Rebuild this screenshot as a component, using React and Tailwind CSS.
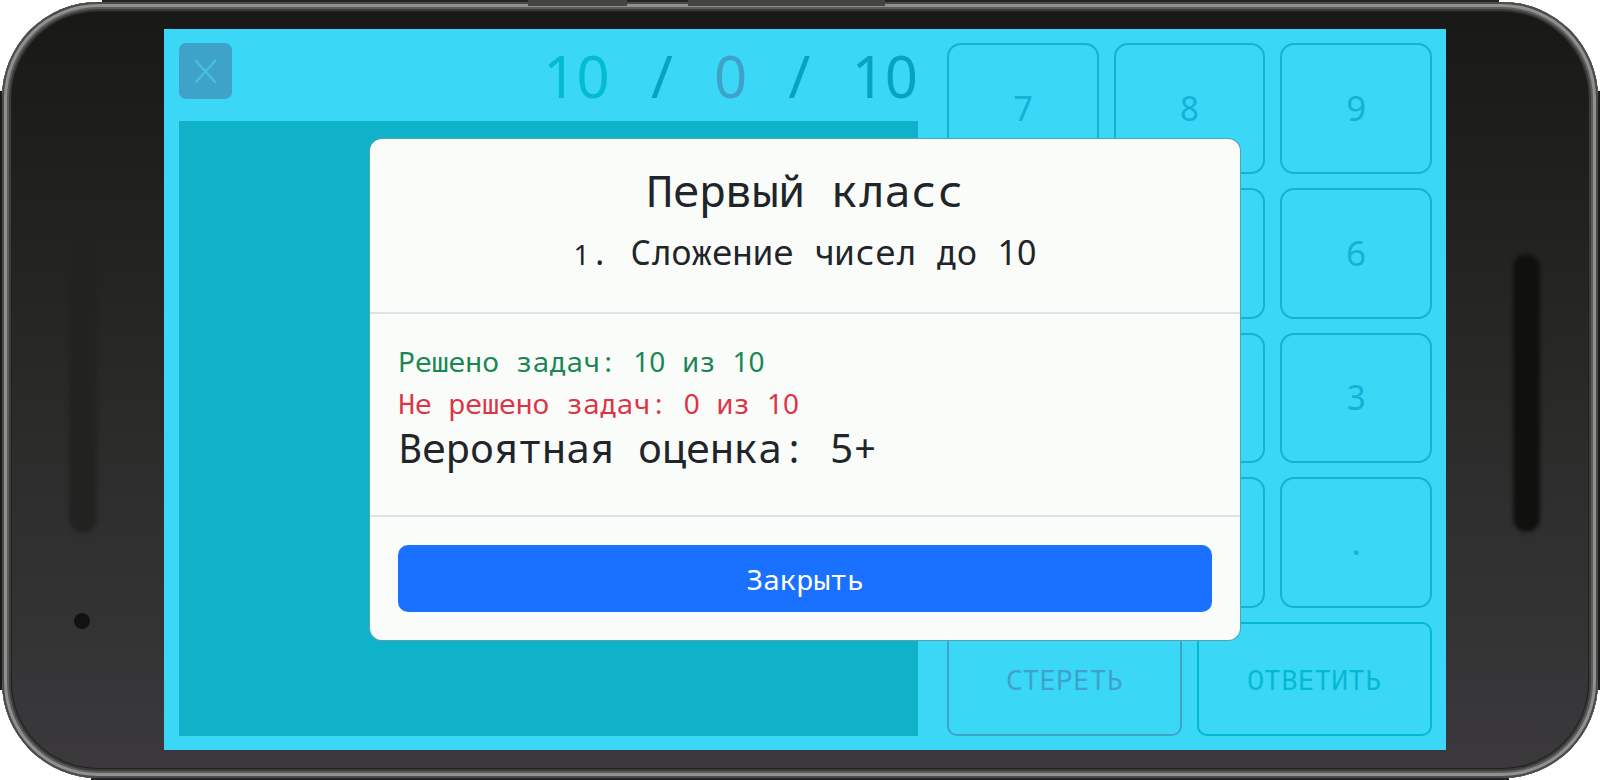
const DIGIT = "font-['Noto_Sans',sans-serif]";

const KEYS = ["7", "8", "9", "4", "5", "6", "1", "2", "3", "-", "0", "."];

const COVERED = ["4", "5", "1", "2", "-", "0"];

function Num({ children, className = "" }) {
  return <span className={`${DIGIT} ${className}`}>{children}</span>;
}

function PhoneDecor() {
  return (
    <div aria-hidden="true" className="pointer-events-none absolute inset-0">
      <div className="absolute top-[91px] bottom-[90px] left-0 w-[3px] bg-[#1c1d1b]" />
      <div className="absolute top-[91px] right-0 bottom-[90px] w-[3px] bg-[#1c1d1b]" />
      <div className="absolute top-0 right-[101px] left-[102px] h-[3px] bg-[#232421]" />
      <div className="absolute right-[91px] bottom-0 left-[91px] h-[3px] bg-[#232224]" />
      <div className="absolute inset-x-0.5 inset-y-0.5 rounded-[96px] bg-linear-to-b from-[#181917] via-[#292a28] to-[#3b393c] shadow-[inset_0_0_0_2px_#4a4b48,inset_0_0_0_5px_#90918e,inset_0_0_0_7px_#5d5e5b,inset_0_0_0_9px_#3b3c39,inset_0_0_0_10px_#20211f]" />
      <div className="absolute top-0 left-[33%] h-1.5 w-[99px] bg-[#444542]" />
      <div className="absolute top-0 left-[43%] h-1.5 w-[197px] bg-[#444542]" />
      <div className="absolute top-[246px] bottom-[247px] left-[69px] w-7 rounded-full bg-[#222321] blur-[2px]" />
      <div className="absolute top-[254px] right-[60px] bottom-[248px] w-[27px] rounded-full bg-[#10110f] blur-[2px]" />
      <div className="absolute bottom-[151px] left-[74px] size-4 rounded-full bg-[#121115]" />
    </div>
  );
}

function Score() {
  return (
    <p className="text-[58px] leading-[66px] whitespace-pre text-[#04a4c6]">
      <Num className="text-[#04bbd0]">10</Num>
      {" / "}
      <Num className="text-[#3fa3c9]">0</Num>
      {" / "}
      <Num>10</Num>
    </p>
  );
}

function Keypad() {
  return (
    <div className="grid grid-cols-6 grid-rows-[131fr_131fr_131fr_131fr_114fr] gap-x-[15px] gap-y-3.5">
      {KEYS.map((k) => (
        <button
          key={k}
          type="button"
          aria-label={k}
          className="col-span-2 rounded-[14px] border-2 border-[#17b1d5] text-[34px] text-[#15b1d6]"
        >
          {COVERED.includes(k) ? null : k}
        </button>
      ))}
      <button type="button" className="col-span-3 rounded-[10px] border-2 border-[#3fa3c9] text-[28px] text-[#3fa3c9]">
        СТЕРЕТЬ
      </button>
      <button type="button" className="col-span-3 rounded-[10px] border-2 border-[#04b9cf] text-[28px] text-[#04b9cf]">
        ОТВЕТИТЬ
      </button>
    </div>
  );
}

function ResultDialog() {
  return (
    <div
      role="dialog"
      aria-modal="true"
      aria-labelledby="result-title"
      className="w-[68%] rounded-[13px] border border-[#0a7f96]/70 bg-[#fafcf9] text-[#212529]"
    >
      <header className="border-b-2 border-[#dee2e6] px-7 pt-[25px] pb-[34px] text-center">
        <h1 id="result-title" className="mb-3 text-[44px] leading-[53px]">
          Первый класс
        </h1>
        <h2 className="text-[34px] leading-[47px]">
          <Num className="text-[28px]">1</Num>. Сложение чисел до <Num>10</Num>
        </h2>
      </header>
      <div className="border-b-2 border-[#dee2e6] px-7 pt-[26px] pb-11">
        <p className="text-[28px] leading-[42px] text-[#198754]">
          Решено задач: <Num>10</Num> из <Num>10</Num>
        </p>
        <p className="text-[28px] leading-[42px] text-[#dc3545]">
          Не решено задач: <Num>0</Num> из <Num>10</Num>
        </p>
        <p className="text-[40px] leading-[47px]">
          Вероятная оценка: <Num>5</Num>+
        </p>
      </div>
      <footer className="p-7">
        <button type="button" className="h-[67px] w-full rounded-[10px] bg-[#1a70ff] text-[28px] text-white">
          Закрыть
        </button>
      </footer>
    </div>
  );
}

export default function App() {
  return (
    <div className="relative flex min-h-screen bg-white pt-[29px] pr-[154px] pb-[30px] pl-[164px] font-['Noto_Sans_Mono','DejaVu_Sans_Mono',monospace]">
      <PhoneDecor />
      <main className="relative grid flex-1 grid-cols-[739fr_485fr] gap-[29px] bg-[#3ad7f7] p-3.5 pl-[15px]">
        <section className="flex flex-col">
          <div className="flex h-[78px] items-start justify-between">
            <button
              type="button"
              aria-label="Закрыть"
              className="flex h-14 w-[53px] items-center justify-center rounded-[7px] bg-[#3fa3c9]"
            >
              <svg viewBox="0 0 22 24" className="h-6 w-[22px]" fill="none" stroke="#43c0e2" strokeWidth="2.4">
                <path d="M0 1 21 24M21 1 0 24" />
              </svg>
            </button>
            <Score />
          </div>
          <div className="flex-1 bg-[#0fb2c8]" />
        </section>
        <Keypad />
        <div className="absolute inset-0 flex items-center justify-center">
          <ResultDialog />
        </div>
      </main>
    </div>
  );
}
